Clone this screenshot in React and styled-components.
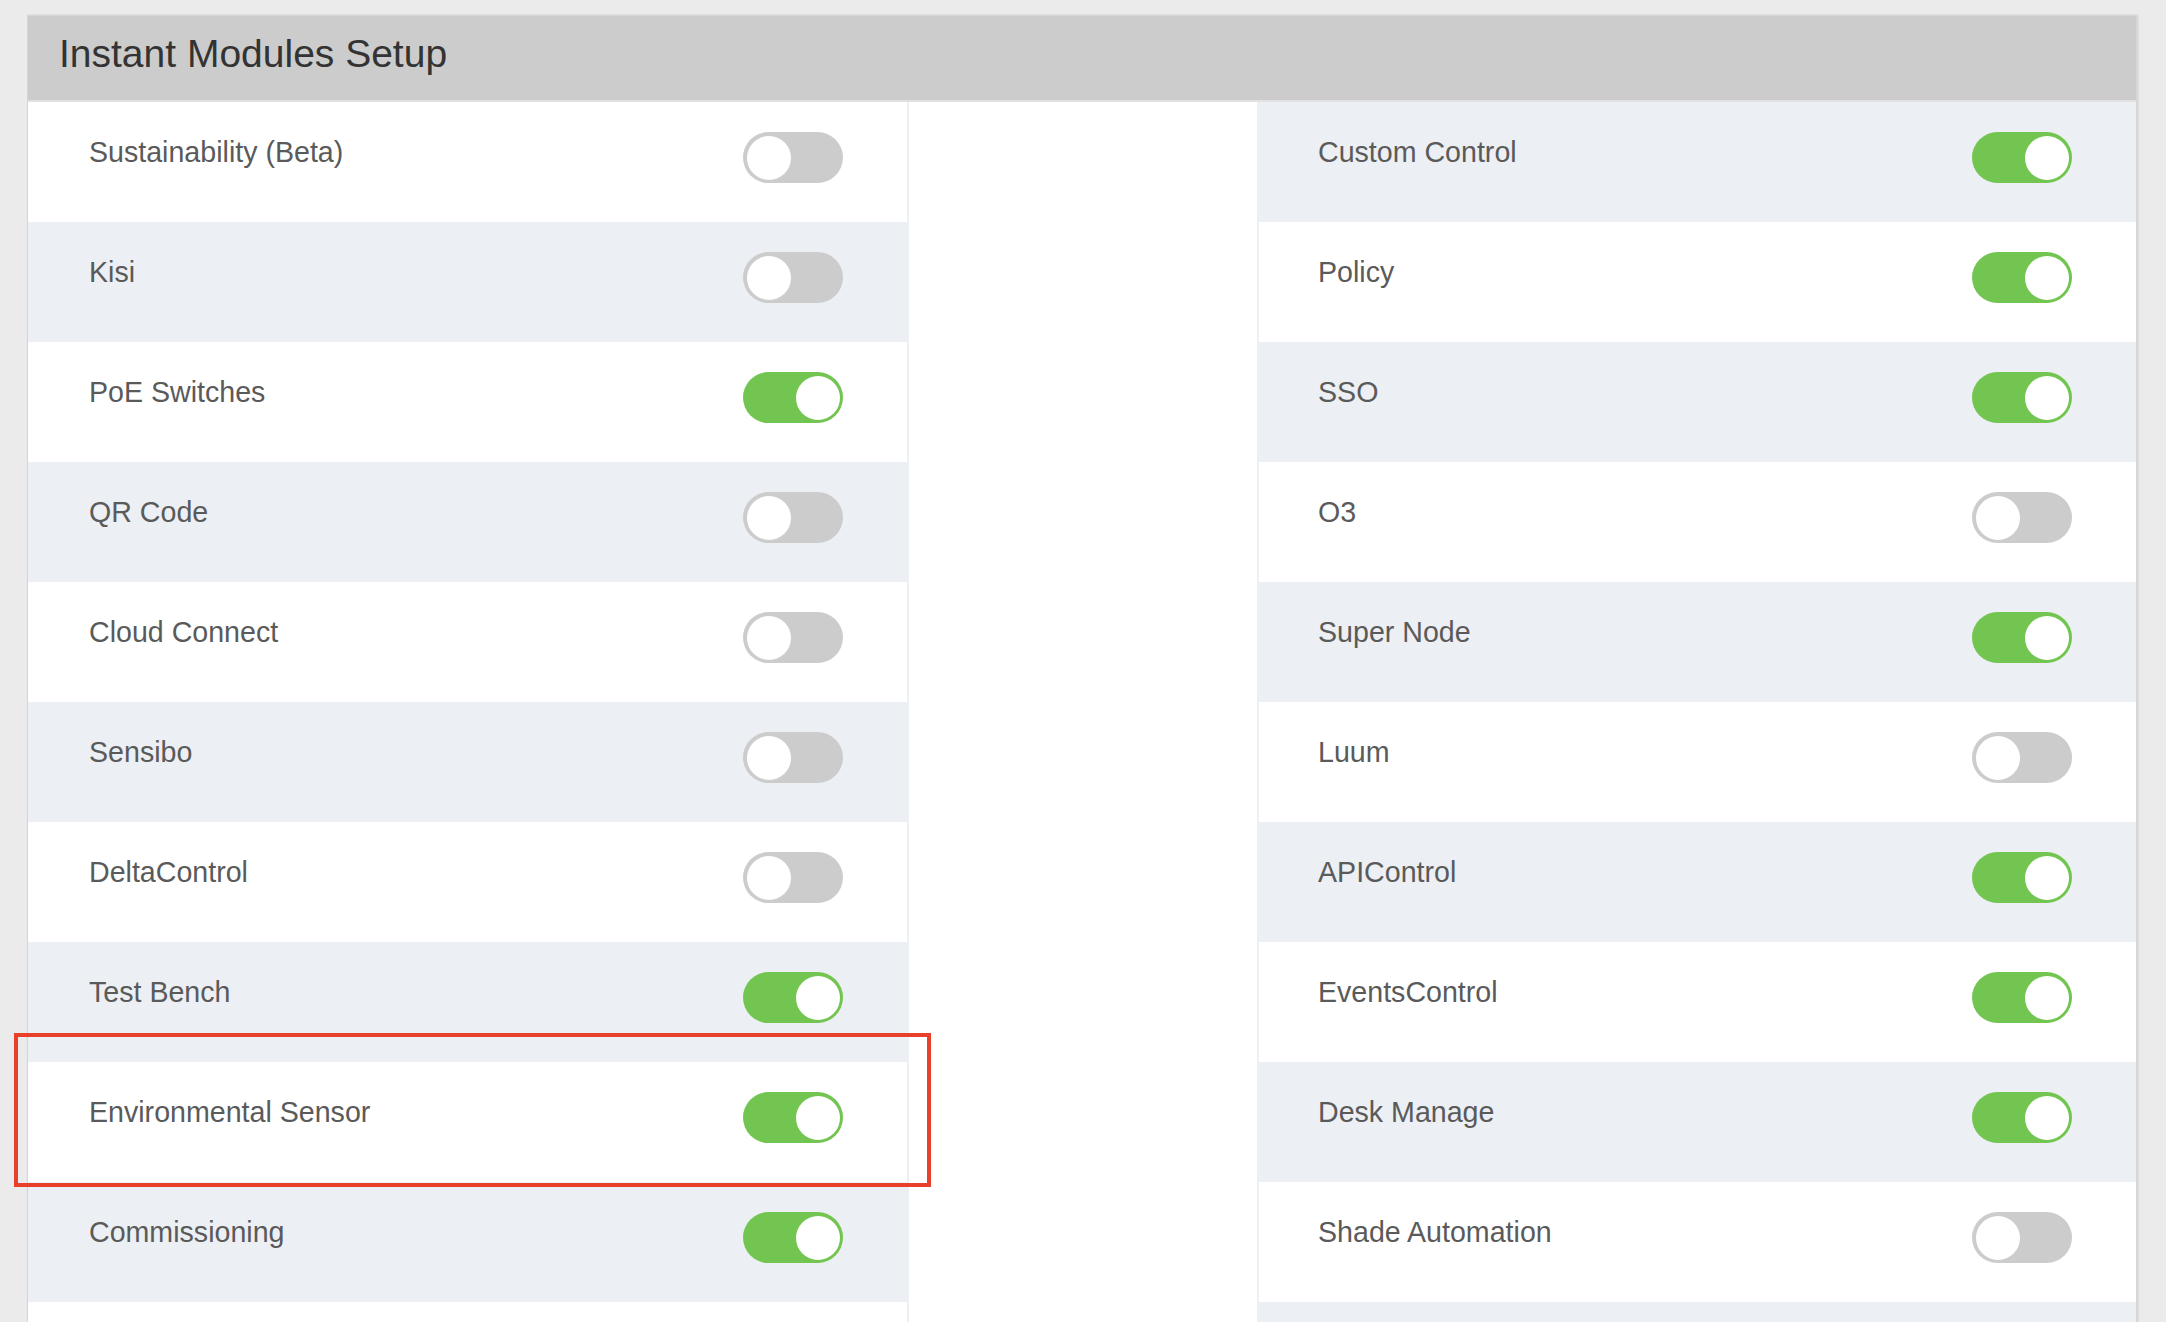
import React, { useState } from 'react'
import styled, { createGlobalStyle } from 'styled-components'

const GlobalStyle = createGlobalStyle`
    html, body {
        margin: 0;
        padding: 0;
        background: #ebebeb;
        font-family: "Liberation Sans", Arial, Helvetica, sans-serif;
    }
    * {
        box-sizing: border-box;
    }
`

const Page = styled.div`
    position: relative;
    padding: 15px 29px 0 27px;
`

const Card = styled.div`
    background: #fff;
    border: 1px solid #d6d6d6;
    border-bottom: none;
    box-shadow: 1px 0 2px rgba(0,0,0,0.12);
`

const Header = styled.div`
    height: 86px;
    padding: 16px 0 0 31px;
    background: #cccccc;
    border-bottom: 2px solid #e1e1e1;
    color: #333;
    font-size: 39px;
    line-height: 44px;
`

const Columns = styled.div`
    display: grid;
    grid-template-columns: 881px 1fr 879px;
`

const List = styled.div`
    display: flex;
    flex-direction: column;
    border-right: ${p => p.side === 'left' ? '2px solid #eceff3' : 'none'};
    border-left: ${p => p.side === 'right' ? '2px solid #eceff3' : 'none'};
`

const Row = styled.div`
    display: flex;
    justify-content: space-between;
    align-items: flex-start;
    height: 120px;
    padding: 30px 64px 0 ${p => p.inset}px;
    background: ${p => p.shaded ? '#eceff3' : '#fff'};
`

const Label = styled.span`
    margin-top: 3px;
    font-size: 28.6px;
    line-height: 34px;
    color: #5a5a5a;
`

const Track = styled.button`
    display: flex;
    align-items: center;
    justify-content: ${p => p.on ? 'flex-end' : 'flex-start'};
    width: 100px;
    height: 51px;
    padding: 0 3.5px;
    border: none;
    border-radius: 26px;
    background: ${p => p.on ? '#72c550' : '#cccccc'};
    cursor: pointer;
`

const Knob = styled.span`
    width: 44px;
    height: 44px;
    border-radius: 50%;
    background: #fff;
`

const Highlight = styled.div`
    position: absolute;
    left: 14px;
    top: 1033px;
    width: 917px;
    height: 154px;
    border: 4px solid #e8402a;
    pointer-events: none;
`

// last row of each column runs past the bottom of the screen
const leftModules = [
    ['Sustainability (Beta)', false],
    ['Kisi', false],
    ['PoE Switches', true],
    ['QR Code', false],
    ['Cloud Connect', false],
    ['Sensibo', false],
    ['DeltaControl', false],
    ['Test Bench', true],
    ['Environmental Sensor', true],
    ['Commissioning', true],
    ['', false],
]

const rightModules = [
    ['Custom Control', true],
    ['Policy', true],
    ['SSO', true],
    ['O3', false],
    ['Super Node', true],
    ['Luum', false],
    ['APIControl', true],
    ['EventsControl', true],
    ['Desk Manage', true],
    ['Shade Automation', false],
    ['', false],
]

const Toggle = ({ initial }) => {
    const [on, setOn] = useState(initial)
    return (
        <Track on={on ? 1 : 0} onClick={() => setOn(!on)} aria-pressed={on}>
            <Knob />
        </Track>
    )
}

const ModuleList = ({ side, items, offset, inset }) => (
    <List side={side}>
        {items.map(([name, on], i) => (
            <Row key={i} inset={inset} shaded={(i + offset) % 2 === 1}>
                <Label>{name}</Label>
                <Toggle initial={on} />
            </Row>
        ))}
    </List>
)

const App = () => (
    <>
        <GlobalStyle />
        <Page>
            <Card>
                <Header>Instant Modules Setup</Header>
                <Columns>
                    <ModuleList side="left" items={leftModules} offset={0} inset={61} />
                    <div />
                    <ModuleList side="right" items={rightModules} offset={1} inset={59} />
                </Columns>
            </Card>
            <Highlight />
        </Page>
    </>
)

export default App
